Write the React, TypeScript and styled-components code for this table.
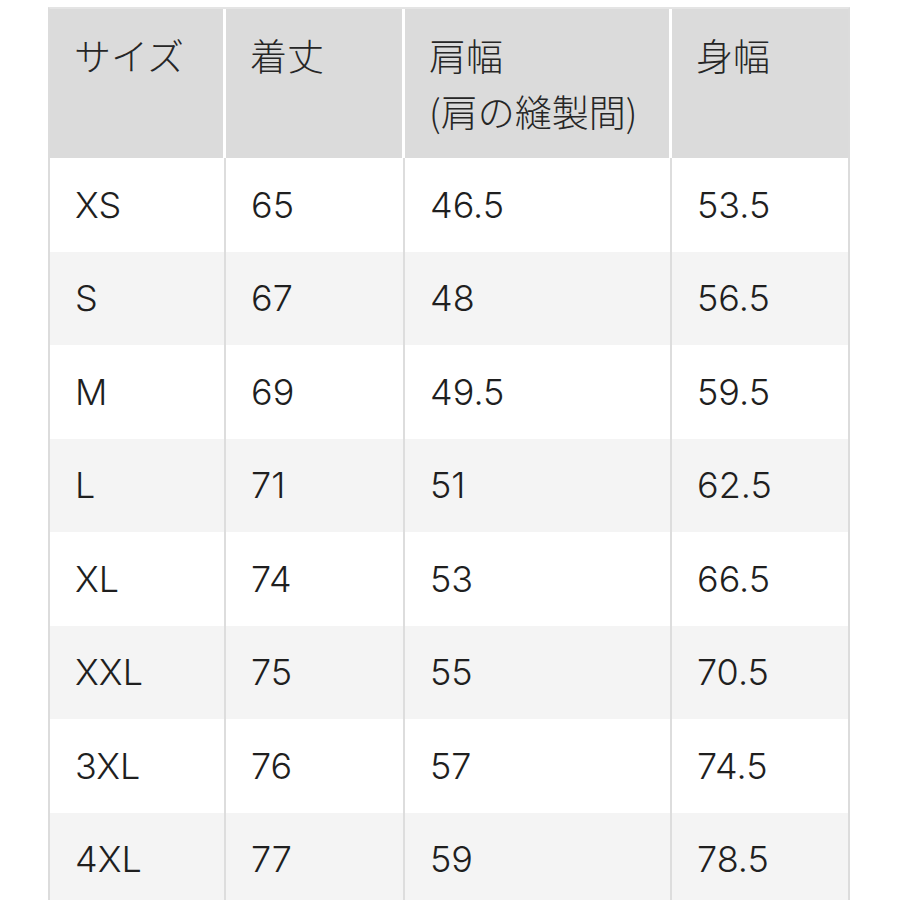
import { createGlobalStyle } from "styled-components";
import styled from "styled-components";

const GlobalStyle = createGlobalStyle`
  html, body {
    margin: 0;
    padding: 0;
    background: #ffffff;
  }
  body {
    font-family: Inter, "Noto Sans CJK JP", sans-serif;
    color: #1e1e1e;
  }
`;

const COLS = "176px 179px 267px 176px";

const Page = styled.div`
  padding: 7px 0 0 48px;
  overflow: hidden;
  height: 900px;
  box-sizing: border-box;
`;

const Table = styled.div`
  width: 802px;
  border-top: 2px solid #e4e4e4;
  border-left: 2px solid #dcdcdc;
  border-right: 2px solid #dcdcdc;
  box-sizing: border-box;
`;

const Row = styled.div<{ $head?: boolean; $alt?: boolean }>`
  display: grid;
  grid-template-columns: ${COLS};
  height: ${(p) => (p.$head ? "149px" : "93.5px")};
  background: ${(p) => (p.$head ? "#ffffff" : p.$alt ? "#f4f4f4" : "#ffffff")};
`;

const HeadCell = styled.div`
  background: #dbdbdb;
  border-right: 3px solid #ffffff;
  padding: 18px 0 0 24px;
  font-size: 37px;
  line-height: 56px;
  font-family: "Noto Sans CJK JP", "Liberation Sans", sans-serif;
  font-weight: 300;
  color: #262626;
  &:last-child {
    border-right: none;
  }
`;

const Cell = styled.div`
  display: flex;
  align-items: center;
  padding-left: 25px;
  font-size: 36px;
  font-weight: 300;
  border-right: 2px solid #dddddd;
  color: #1f1f1f;
  &:last-child {
    border-right: none;
  }
`;

const headers = [["サイズ"], ["着丈"], ["肩幅", "(肩の縫製間)"], ["身幅"]];

const rows = [
  ["XS", "65", "46.5", "53.5"],
  ["S", "67", "48", "56.5"],
  ["M", "69", "49.5", "59.5"],
  ["L", "71", "51", "62.5"],
  ["XL", "74", "53", "66.5"],
  ["XXL", "75", "55", "70.5"],
  ["3XL", "76", "57", "74.5"],
  ["4XL", "77", "59", "78.5"],
];

export default function App() {
  return (
    <>
      <GlobalStyle />
      <Page>
        <Table>
          <Row $head>
            {headers.map((lines, i) => (
              <HeadCell key={i}>
                {lines.map((l, j) => (
                  <div key={j}>{l}</div>
                ))}
              </HeadCell>
            ))}
          </Row>
          {rows.map((r, i) => (
            <Row key={r[0]} $alt={i % 2 === 1}>
              {r.map((v, j) => (
                <Cell key={j}>{v}</Cell>
              ))}
            </Row>
          ))}
        </Table>
      </Page>
    </>
  );
}
